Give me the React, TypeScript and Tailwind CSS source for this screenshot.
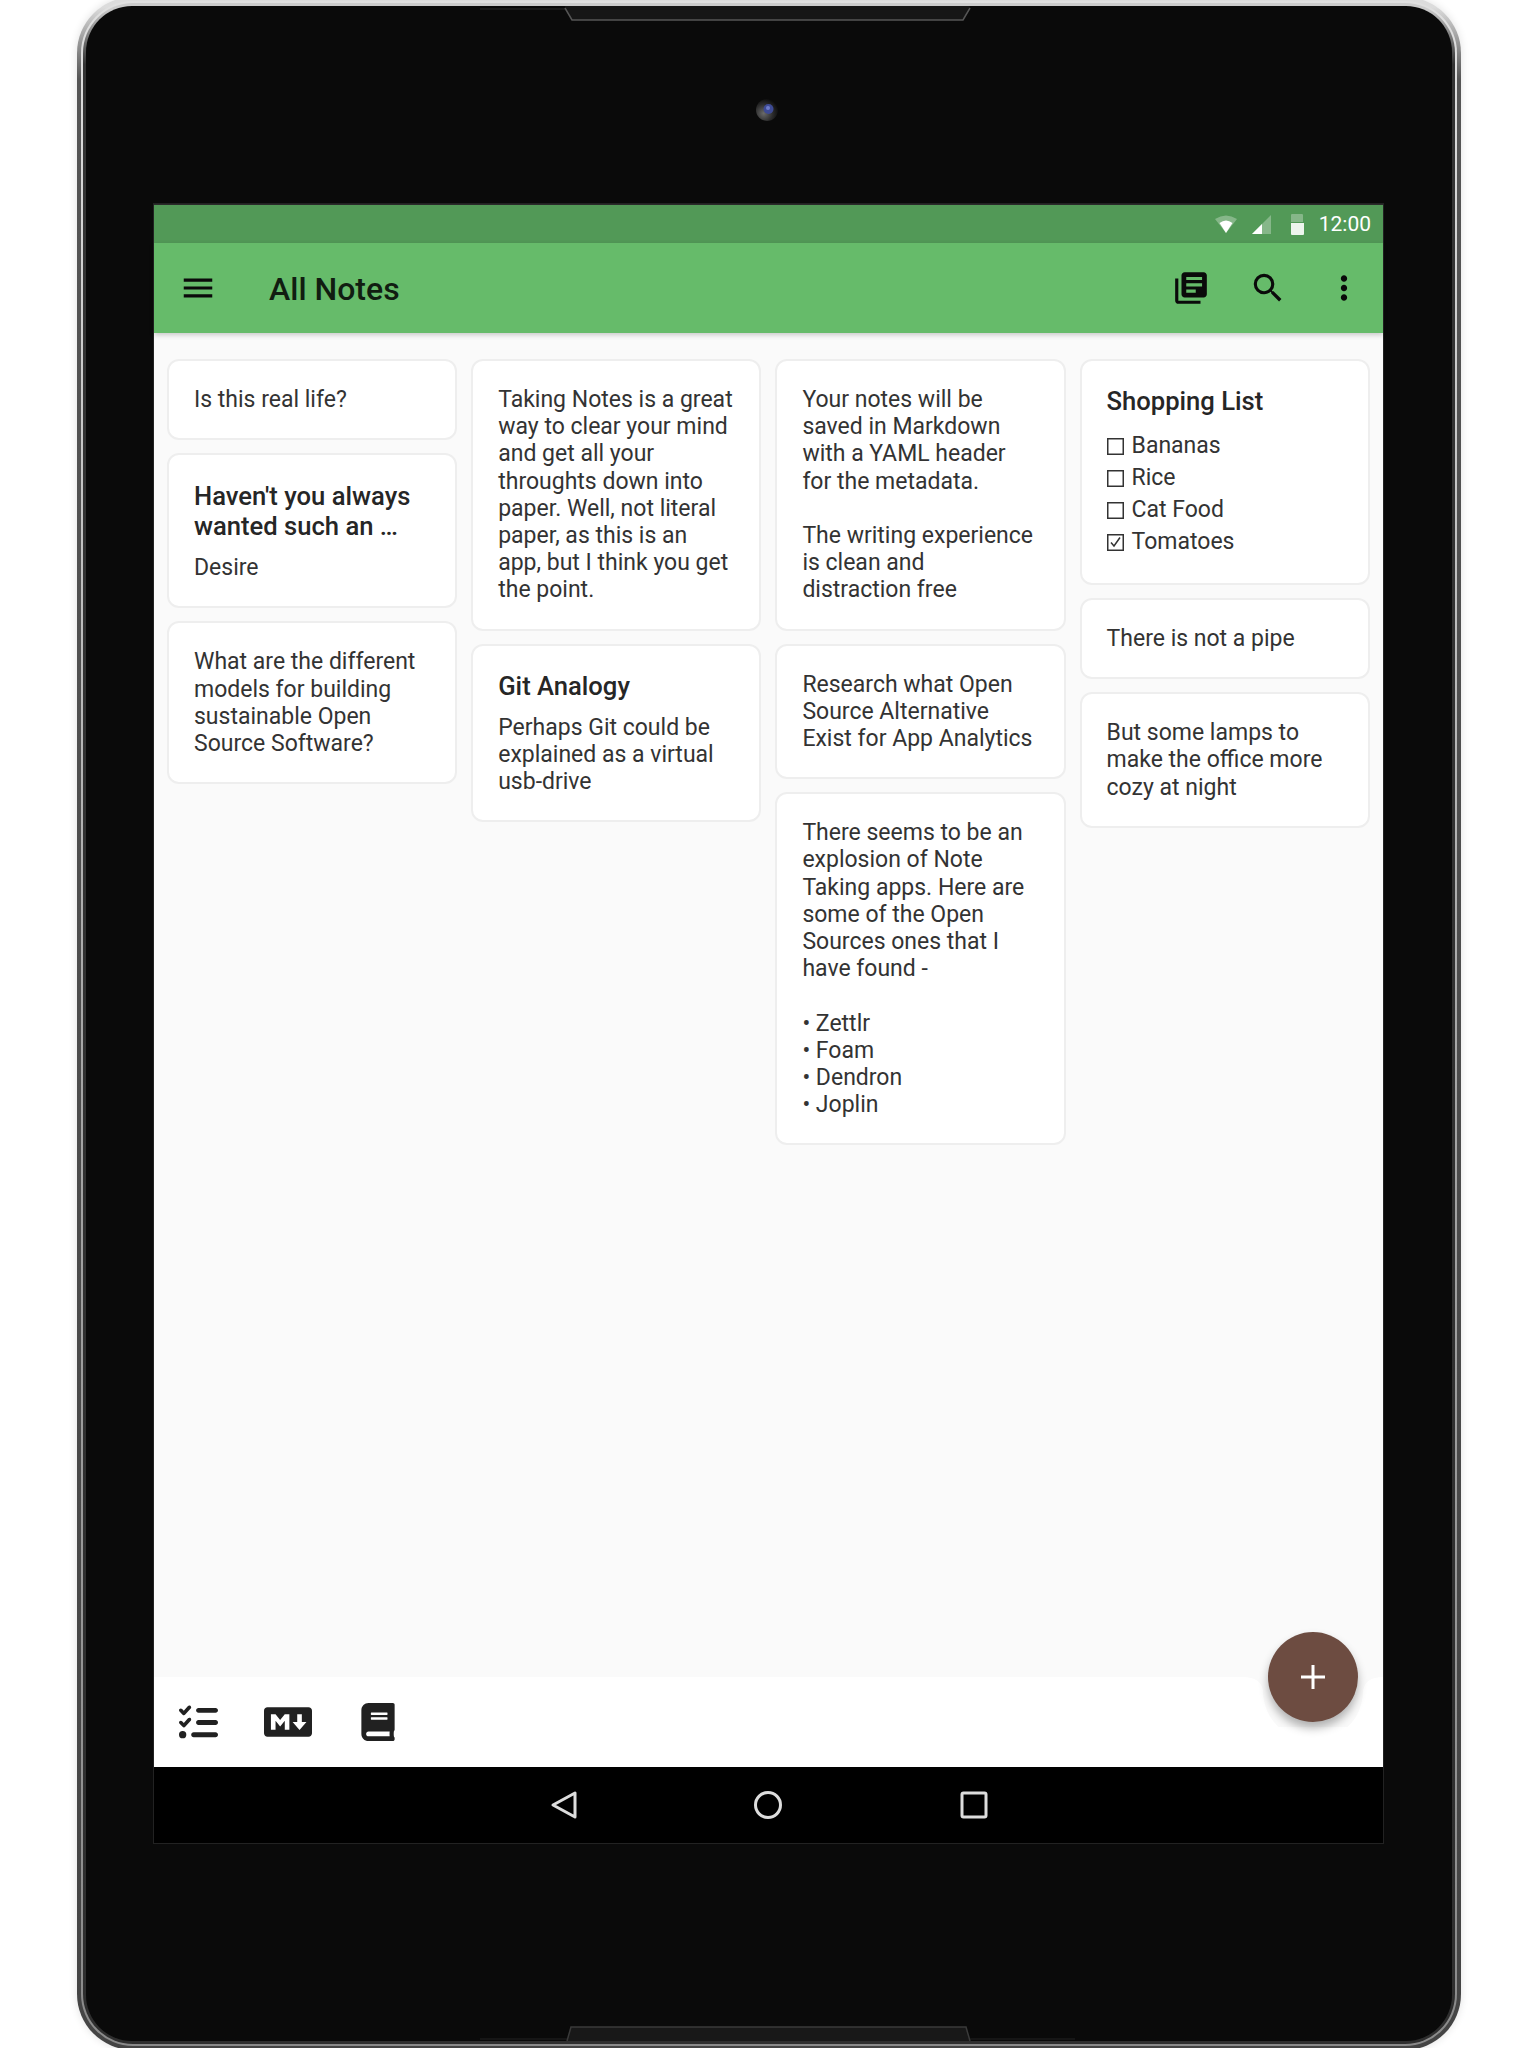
import { MdLibraryBooks, MdMenu, MdMoreVert, MdSearch } from 'react-icons/md';
import { FaBook, FaMarkdown } from 'react-icons/fa';
import { FaListCheck } from 'react-icons/fa6';

const card = 'rounded-[12px] border-2 border-[#eeeeee] bg-white px-[25px] pt-[25px] pb-[25px] text-[23px] leading-[27.2px] text-[#333333]';
const title = 'text-[25.6px] leading-[30px] font-medium text-[#262626]';

function Note({ text }: { text: string }) {
  return <div className={`${card} whitespace-pre-line`}>{text}</div>;
}

function CheckItem({ label, checked }: { label: string; checked?: boolean }) {
  return (
    <div className="flex h-[32px] items-center gap-[8px]">
      <svg width="17" height="17" viewBox="0 0 17 17" fill="none" stroke="#333333" strokeWidth="1.5">
        <rect x="0.75" y="0.75" width="15.5" height="15.5" />
        {checked && <path d="M4 8.5l3 3.5 6-8.5" />}
      </svg>
      <span>{label}</span>
    </div>
  );
}

function StatusIcons() {
  return (
    <div className="flex items-center">
      <svg width="22" height="18" viewBox="0 0 22 18" className="mr-[15px]">
        <path d="M0 4Q11-3 22 4L11 18Z" fill="#ffffff" fillOpacity="0.3" />
        <path d="M4.5 8Q11 3 17.5 8L11 18Z" fill="#ffffff" />
      </svg>
      <svg width="19" height="19" viewBox="0 0 19 19" className="mr-[19px]">
        <path d="M19 0V19H0Z" fill="#ffffff" fillOpacity="0.3" />
        <path d="M10 9V19H0Z" fill="#ffffff" />
      </svg>
      <svg width="14" height="22" viewBox="0 0 14 22" className="mr-[15px]">
        <path d="M1 2Q1 1 2 1H12Q13 1 13 2V9H1Z" fill="#ffffff" fillOpacity="0.3" />
        <path d="M1 10H14V21Q14 22 13 22H2Q1 22 1 21Z" fill="#ffffff" fillOpacity="0.9" />
      </svg>
      <span className="text-[21px] leading-none text-white">12:00</span>
    </div>
  );
}

export default function App() {
  return (
    <div className="relative h-[2048px] overflow-hidden bg-white [font-family:Roboto,sans-serif]">
      {/* device frame */}
      <div className="mt-[-3px] ml-[77px] h-[2053px] w-[1384px] rounded-[56px] bg-gradient-to-b from-[#dcdcdc] from-[0.5%] via-[#555555] via-[4%] to-[#444444] p-[4px] shadow-[0_0_8px_rgba(0,0,0,0.12)]">
        <div className="h-full rounded-[52px] bg-gradient-to-b from-[#e0e0e0] via-[#a8a8a8] to-[#8a8a8a] p-[2px]">
          <div className="h-full rounded-[50px] bg-gradient-to-b from-[#cccccc] from-[0.3%] via-[#333333] via-[3%] to-[#2e2e2e] p-[3px]">
            <div className="h-full rounded-[46px] bg-[#0a0a0a] pt-[198px] pl-[68px]">
              {/* screen */}
              <div className="relative flex h-[1639px] w-[1229px] flex-col border-t border-[#2a2a2a] outline outline-[#222222]">
                <div className="flex h-[38px] items-center justify-end bg-[#529957] pr-[12px]">
                  <StatusIcons />
                </div>
                <header className="z-10 flex h-[90px] items-center bg-[#66bb6a] shadow-[0_2px_5px_rgba(0,0,0,0.2)]">
                  <MdMenu className="ml-[25px] text-[#0a0a0a]" size={38} />
                  <h1 className="ml-[52px] pt-[2px] text-[32px] font-medium text-[#111d11]">All Notes</h1>
                  <div className="ml-auto flex items-center text-[#0a0a0a]">
                    <MdLibraryBooks size={38} />
                    <MdSearch size={38} className="ml-[39px]" />
                    <MdMoreVert size={38} className="ml-[38px] mr-[20px]" />
                  </div>
                </header>

                <main className="flex flex-1 items-start gap-[14px] bg-[#fafafa] px-[13px] pt-[26px]">
                  <div className="flex w-[290.2px] flex-col gap-[13px]">
                    <Note text="Is this real life?" />
                    <div className={`${card} pt-[26px]`}>
                      <div className={`${title} mb-[13px]`}>Haven't you always wanted such an …</div>
                      <div>Desire</div>
                    </div>
                    <Note text="What are the different models for building sustainable Open Source Software?" />
                  </div>
                  <div className="flex w-[290.2px] flex-col gap-[13px]">
                    <Note text="Taking Notes is a great way to clear your mind and get all your throughts down into paper. Well, not literal paper, as this is an app, but I think you get the point." />
                    <div className={card}>
                      <div className={`${title} mb-[13px]`}>Git Analogy</div>
                      <div>Perhaps Git could be explained as a virtual usb-drive</div>
                    </div>
                  </div>
                  <div className="flex w-[290.2px] flex-col gap-[13px]">
                    <Note text={'Your notes will be saved in Markdown with a YAML header for the metadata.\n\nThe writing experience is clean and distraction free'} />
                    <Note text="Research what Open Source Alternative Exist for App Analytics" />
                    <Note text={'There seems to be an explosion of Note Taking apps. Here are some of the Open Sources ones that I have found -\n\n• Zettlr\n• Foam\n• Dendron\n• Joplin'} />
                  </div>
                  <div className="flex w-[290.2px] flex-col gap-[13px]">
                    <div className={card}>
                      <div className={`${title} mb-[14px]`}>Shopping List</div>
                      <CheckItem label="Bananas" />
                      <CheckItem label="Rice" />
                      <CheckItem label="Cat Food" />
                      <CheckItem label="Tomatoes" checked />
                    </div>
                    <Note text="There is not a pipe" />
                    <Note text="But some lamps to make the office more cozy at night" />
                  </div>
                </main>

                <div className="relative flex h-[90px] items-center bg-white text-[#212121]">
                  <FaListCheck size={39} className="ml-[25px]" />
                  <FaMarkdown size={48} className="ml-[46px]" />
                  <FaBook size={38} className="ml-[47px]" />
                  {/* cut-out behind the add button */}
                  <svg width="140" height="50" viewBox="0 0 140 50" className="absolute top-0 left-[1089px]">
                    <path d="M0 0H140Q122 0 120 14A50 50 0 0 1 20 14Q18 0 0 0Z" fill="#fafafa" />
                  </svg>
                  <button className="absolute top-[-45px] left-[1114px] flex h-[90px] w-[90px] items-center justify-center rounded-full bg-[#6d4c41] shadow-[0_6px_10px_rgba(0,0,0,0.3)]">
                    <svg width="24" height="24" viewBox="0 0 24 24" stroke="#ffffff" strokeWidth="3">
                      <path d="M12 0V24M0 12H24" />
                    </svg>
                  </button>
                </div>

                <nav className="h-[76px] bg-black">
                  <svg width="1229" height="76" viewBox="0 0 1229 76" fill="none" stroke="#dddddd" strokeWidth="3" strokeLinejoin="round" className="block">
                    <path d="M421 26V50L399 38Z" />
                    <circle cx="614" cy="38" r="12.5" />
                    <rect x="808" y="26" width="24" height="24" rx="1.5" />
                  </svg>
                </nav>
              </div>
            </div>
          </div>
        </div>
      </div>

      {/* hardware details over the frame */}
      <svg width="600" height="16" viewBox="0 0 600 16" className="absolute top-[6px] left-[480px]">
        <path d="M0 3H85" stroke="#2a2a2a" strokeWidth="1" />
        <path d="M85 0L92 14H483L490 0Z" fill="#161616" />
        <path d="M85 2L92 14H483L490 2" fill="none" stroke="#555555" strokeWidth="1.5" />
      </svg>
      <svg width="600" height="16" viewBox="0 0 600 16" className="absolute top-[2026px] left-[480px]">
        <path d="M0 13H87M490 13H595" stroke="#222222" strokeWidth="1" />
        <path d="M87 15L91 1H486L490 15Z" fill="#181818" />
        <path d="M87 15L91 1H486L490 15" fill="none" stroke="#3a3a3a" strokeWidth="1.5" />
      </svg>
      <svg width="24" height="24" viewBox="0 0 24 24" className="absolute top-[98px] left-[755px]">
        <defs>
          <radialGradient id="lens" cx="0.35" cy="0.65" r="0.7">
            <stop offset="0" stopColor="#6a6a6a" />
            <stop offset="0.6" stopColor="#2a2a2a" />
            <stop offset="1" stopColor="#0a0a0a" />
          </radialGradient>
        </defs>
        <circle cx="12" cy="12" r="11" fill="url(#lens)" />
        <circle cx="13.5" cy="11" r="5" fill="#3d4a94" />
        <circle cx="13" cy="10" r="2" fill="#6e7ccc" />
      </svg>
    </div>
  );
}
